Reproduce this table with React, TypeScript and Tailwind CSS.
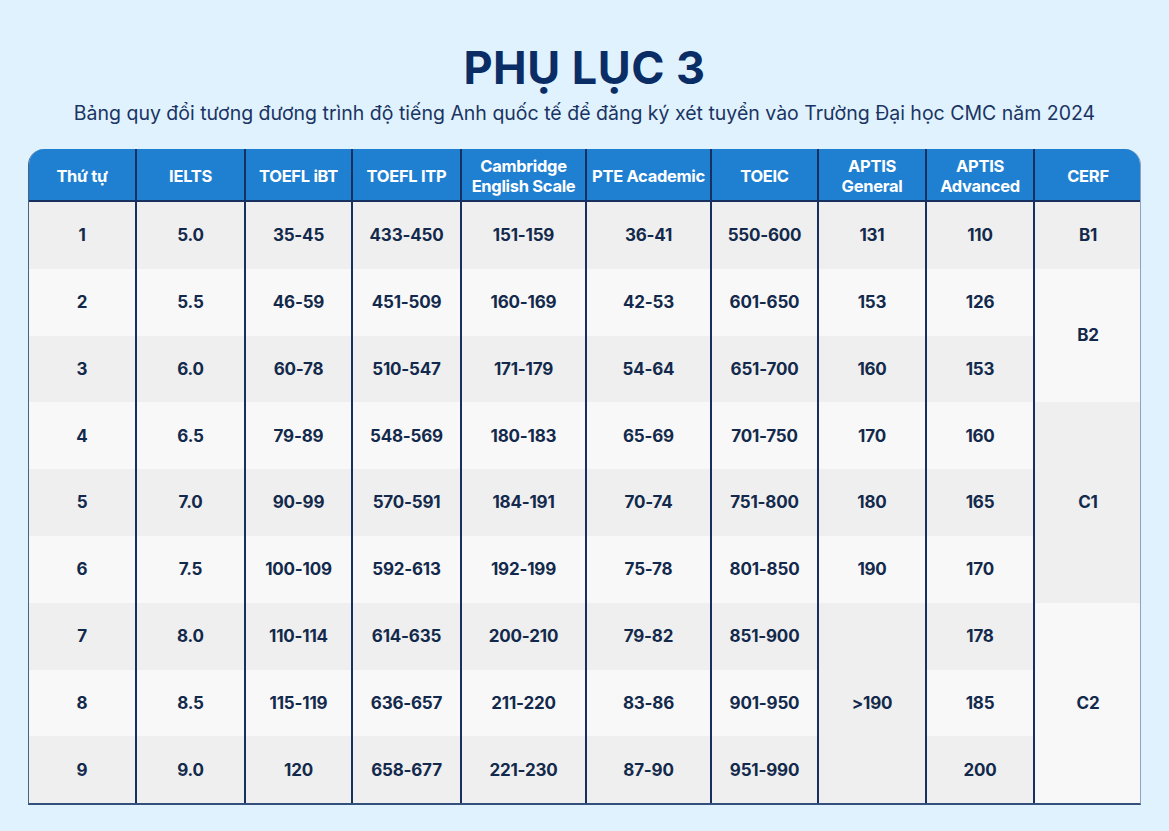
import React from 'react';

const headers = [
  ['Thứ tự'],
  ['IELTS'],
  ['TOEFL iBT'],
  ['TOEFL ITP'],
  ['Cambridge', 'English Scale'],
  ['PTE Academic'],
  ['TOEIC'],
  ['APTIS', 'General'],
  ['APTIS', 'Advanced'],
  ['CERF'],
];

const rows = [
  ['1', '5.0', '35-45', '433-450', '151-159', '36-41', '550-600', '131', '110'],
  ['2', '5.5', '46-59', '451-509', '160-169', '42-53', '601-650', '153', '126'],
  ['3', '6.0', '60-78', '510-547', '171-179', '54-64', '651-700', '160', '153'],
  ['4', '6.5', '79-89', '548-569', '180-183', '65-69', '701-750', '170', '160'],
  ['5', '7.0', '90-99', '570-591', '184-191', '70-74', '751-800', '180', '165'],
  ['6', '7.5', '100-109', '592-613', '192-199', '75-78', '801-850', '190', '170'],
  ['7', '8.0', '110-114', '614-635', '200-210', '79-82', '851-900', '', '178'],
  ['8', '8.5', '115-119', '636-657', '211-220', '83-86', '901-950', '', '185'],
  ['9', '9.0', '120', '658-677', '221-230', '87-90', '951-990', '', '200'],
];

const dark = 'bg-[#efefef]';
const light = 'bg-[#f8f8f8]';

function Cell({ children, className = '' }: { children?: React.ReactNode; className?: string }) {
  return (
    <div className={`flex items-center justify-center pt-[1px] text-[17px] font-bold text-[#13294b] tracking-[-0.2px] ${className}`}>
      {children}
    </div>
  );
}

export default function App() {
  return (
    <div className="min-h-[831px] w-full bg-[#e0f2fd] pt-[41px] font-['Inter','Noto_Sans',sans-serif]">
      <h1 className="text-center text-[45px] font-bold leading-[54px] text-[#0b2d66] tracking-[0.5px]">PHỤ LỤC 3</h1>
      <p className="mt-[6px] text-center text-[19.5px] leading-[24px] text-[#1a3463]">
        Bảng quy đổi tương đương trình độ tiếng Anh quốc tế để đăng ký xét tuyển vào Trường Đại học CMC năm 2024
      </p>

      <div className="mx-[28px] mt-[24px] w-[1113px] overflow-hidden rounded-t-[16px] border-b-2 border-l border-r border-b-[#34507d] border-l-[#4a6288] border-r-[#8fa1bc]">
        <div className="grid grid-cols-[106px_109px_107px_109px_125px_125px_107px_108px_108px_108px] grid-rows-[53px_repeat(9,66.8px)]">
          {headers.map((h, i) => (
            <div
              key={i}
              className={`flex flex-col items-center justify-center border-b-2 border-b-[#173060] bg-[#1f7fd1] pt-[3px] text-[16.5px] font-bold leading-[20px] text-white tracking-[-0.3px] ${
                i > 0 ? 'border-l-2 border-l-[#173060]' : ''
              }`}
            >
              {h.map((t) => (
                <span key={t}>{t}</span>
              ))}
            </div>
          ))}

          {rows.map((r, ri) => {
            const bg = ri % 2 === 0 ? dark : light;
            return (
              <React.Fragment key={ri}>
                {r.map((v, ci) => {
                  if (ci === 7 && ri >= 6) {
                    if (ri !== 6) return null;
                    return (
                      <Cell key={ci} className={`row-span-3 border-l-2 border-l-[#173060] ${dark}`}>
                        &gt;190
                      </Cell>
                    );
                  }
                  return (
                    <Cell key={ci} className={`${bg} ${ci > 0 ? 'border-l-2 border-l-[#173060]' : ''}`}>
                      {v}
                    </Cell>
                  );
                })}
                {ri === 0 && <Cell className={`border-l-2 border-l-[#173060] ${dark}`}>B1</Cell>}
                {ri === 1 && <Cell className={`row-span-2 border-l-2 border-l-[#173060] ${light}`}>B2</Cell>}
                {ri === 3 && <Cell className={`row-span-3 border-l-2 border-l-[#173060] ${dark}`}>C1</Cell>}
                {ri === 6 && <Cell className={`row-span-3 border-l-2 border-l-[#173060] ${light}`}>C2</Cell>}
              </React.Fragment>
            );
          })}
        </div>
      </div>
    </div>
  );
}
